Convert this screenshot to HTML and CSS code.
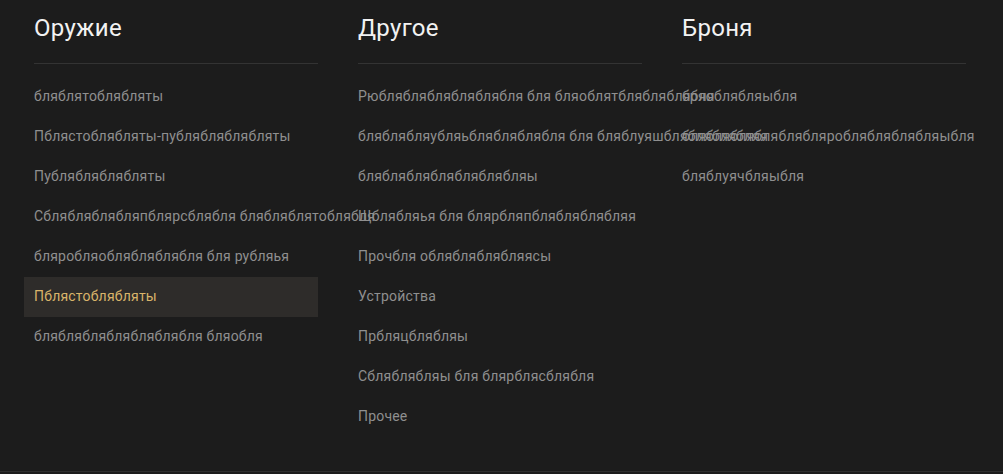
FILE: index.html
```html
<!DOCTYPE html>
<html lang="ru">
<head>
    <meta charset="UTF-8">
    <meta name="viewport" content="width=device-width, initial-scale=1.0">
    <title>Каталог</title>
    <link rel="stylesheet" href="styles.css">
</head>
<body>
    <div class="catalog">
        <div class="category">
            <h2 class="category-title">Оружие</h2>
            <ul class="category-list">
                <li>бляблятоблябляты</li>
                <li>Пблястоблябляты-публябляблябляты</li>
                <li>Публябляблябляты</li>
                <li>Сблябляблябляпблярсблябля блябляблятоблябля</li>
                <li>бляробляоблябляблябля бля рубляья</li>
                <li class="active">Пблястоблябляты</li>
                <li>бляблябляблябляблябля бляобля</li>
            </ul>
        </div>
        <div class="category">
            <h2 class="category-title">Другое</h2>
            <ul class="category-list">
                <li>Рюблябляблябляблябля бля бляоблятблябляблябля</li>
                <li>бляблябляубляьблябляблябля бля бляблуяшблябляблябляя</li>
                <li>бляблябляблябляблябляы</li>
                <li>Щблябляья бля блярбляпблябляблябляя</li>
                <li>Прочбля облябляблябляясы</li>
                <li>Устройства</li>
                <li>Прбляцблябляы</li>
                <li>Сбляблябляы бля блярблясблябля</li>
                <li>Прочее</li>
            </ul>
        </div>
        <div class="category">
            <h2 class="category-title">Броня</h2>
            <ul class="category-list">
                <li>бряоблябляыбля</li>
                <li>блябляблябляблябляроблябляблябляыбля</li>
                <li>бляблуячбляыбля</li>
            </ul>
        </div>
    </div>
</body>
</html>
```

FILE: styles.css
```css
* {
    margin: 0;
    padding: 0;
    box-sizing: border-box;
}

body {
    font-family: Roboto, "Liberation Sans", sans-serif;
    background: #1c1c1c;
    color: #8f8f8f;
}

.catalog {
    display: flex;
    gap: 30px;
    padding: 0 24px;
    height: 472px;
    border-bottom: 1px solid #2e2e2e;
}

.category {
    width: 294px;
    flex-shrink: 0;
}

.category-title {
    margin-left: 10px;
    padding-top: 13px;
    height: 64px;
    font-size: 24px;
    font-weight: 400;
    line-height: 31px;
    letter-spacing: 0.3px;
    color: #f2f2f2;
    border-bottom: 1px solid #333;
}

.category-list {
    list-style: none;
    margin-top: 13px;
}

.category-list li {
    height: 40px;
    line-height: 39px;
    padding-left: 10px;
    font-size: 14px;
    letter-spacing: 0.2px;
    white-space: nowrap;
}

.category-list li.active {
    background: #2e2c2a;
    color: #d9b46a;
}
```
